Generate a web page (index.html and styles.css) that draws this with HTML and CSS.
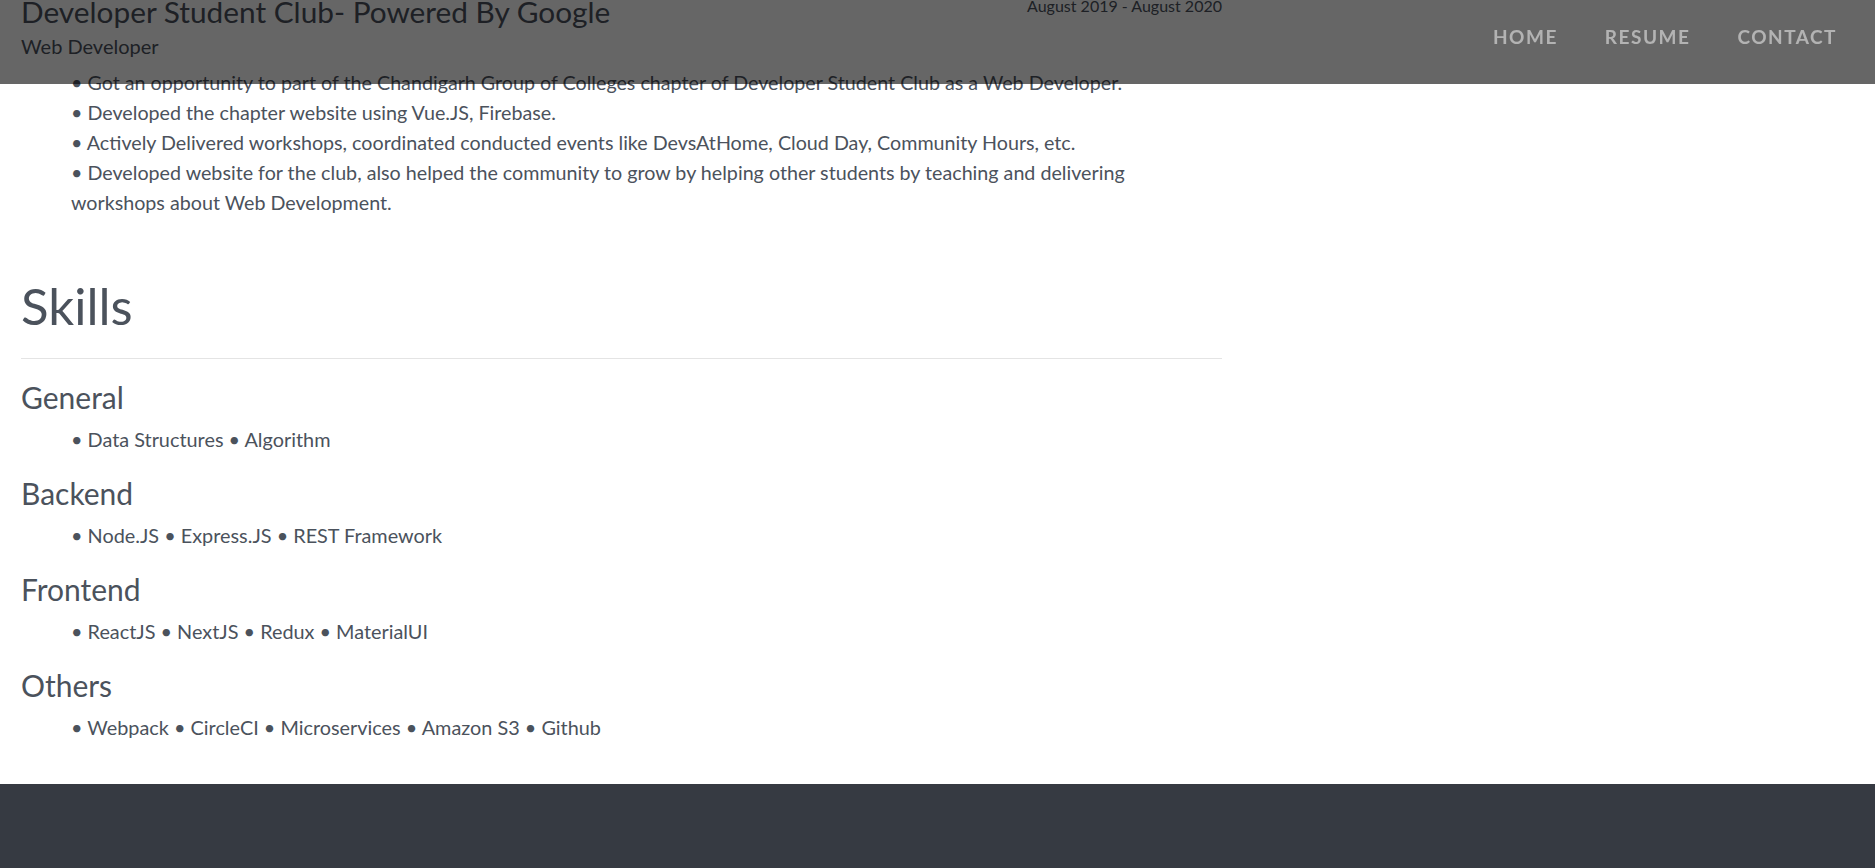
FILE: index.html
```html
<!DOCTYPE html>
<html lang="en">
<head>
<meta charset="utf-8">
<title>Resume</title>
<link rel="stylesheet" href="styles.css">
</head>
<body>
<header class="topbar">
  <nav class="nav">
    <a class="nav-link" href="#home">Home</a>
    <a class="nav-link" href="#resume">Resume</a>
    <a class="nav-link" href="#contact">Contact</a>
  </nav>
</header>

<main class="page">
  <div class="column">
    <section class="job">
      <div class="job-head">
        <h3 class="job-title">Developer Student Club- Powered By Google</h3>
        <span class="job-date">August 2019 - August 2020</span>
      </div>
      <div class="job-role">Web Developer</div>
      <ul class="points">
        <li>• Got an opportunity to part of the Chandigarh Group of Colleges chapter of Developer Student Club as a Web Developer.</li>
        <li>• Developed the chapter website using Vue.JS, Firebase.</li>
        <li>• Actively Delivered workshops, coordinated conducted events like DevsAtHome, Cloud Day, Community Hours, etc.</li>
        <li>• Developed website for the club, also helped the community to grow by helping other students by teaching and delivering workshops about Web Development.</li>
      </ul>
    </section>

    <section class="skills">
      <h2 class="section-title">Skills</h2>
      <div class="skill-group">
        <h4 class="skill-title">General</h4>
        <p class="skill-list">• Data Structures • Algorithm</p>
      </div>
      <div class="skill-group">
        <h4 class="skill-title">Backend</h4>
        <p class="skill-list">• Node.JS • Express.JS • REST Framework</p>
      </div>
      <div class="skill-group">
        <h4 class="skill-title">Frontend</h4>
        <p class="skill-list">• ReactJS • NextJS • Redux • MaterialUI</p>
      </div>
      <div class="skill-group">
        <h4 class="skill-title">Others</h4>
        <p class="skill-list">• Webpack • CircleCI • Microservices • Amazon S3 • Github</p>
      </div>
    </section>
  </div>
</main>

<footer class="footer"></footer>
</body>
</html>
```

FILE: styles.css
```css
* { box-sizing: border-box; }

html, body {
  margin: 0;
  padding: 0;
}

body {
  font-family: Lato, "Open Sans", "Liberation Sans", sans-serif;
  color: #4b525c;
  background: #ffffff;
}

.topbar {
  position: fixed;
  top: 0;
  left: 0;
  right: 0;
  height: 84px;
  background: rgba(0, 0, 0, 0.6);
  z-index: 10;
  display: flex;
  justify-content: flex-end;
  align-items: flex-start;
  padding: 26px 38px 0 0;
}

.nav {
  display: flex;
  gap: 47px;
}

.nav-link {
  font-size: 19px;
  line-height: 1.2;
  font-weight: 700;
  letter-spacing: 1.5px;
  text-transform: uppercase;
  text-decoration: none;
  color: rgba(255, 255, 255, 0.5);
}

.page {
  margin-top: -6px;
  padding: 0 0 42px 21px;
}

.column {
  width: 1201px;
}

.job-head {
  display: flex;
  justify-content: space-between;
  align-items: flex-start;
}

.job-title {
  margin: 0;
  font-size: 29.8px;
  line-height: 36px;
  font-weight: 400;
}

.job-date {
  font-size: 16px;
  line-height: 1.2;
  margin-top: 2px;
}

.job-role {
  margin-top: 4px;
  font-size: 20px;
  line-height: 1.2;
}

.points {
  list-style: none;
  margin: 10px 0 0;
  padding: 0 0 0 50px;
}

.points li {
  font-size: 19.7px;
  line-height: 30px;
}

.skills {
  margin-top: 57px;
}

.section-title {
  margin: 0;
  font-size: 51px;
  line-height: 1.2;
  font-weight: 400;
  padding-bottom: 22px;
  border-bottom: 1px solid #e4e4e4;
}

.skill-group {
  margin-top: 21px;
}

.skill-group:first-of-type {
  margin-top: 20px;
}

.skill-title {
  margin: 0;
  font-size: 30px;
  line-height: 1.2;
  font-weight: 400;
}

.skill-list {
  margin: 9px 0 0;
  padding-left: 50px;
  font-size: 19.85px;
  line-height: 30px;
}

.footer {
  background: #363a42;
  height: 200px;
}
```
